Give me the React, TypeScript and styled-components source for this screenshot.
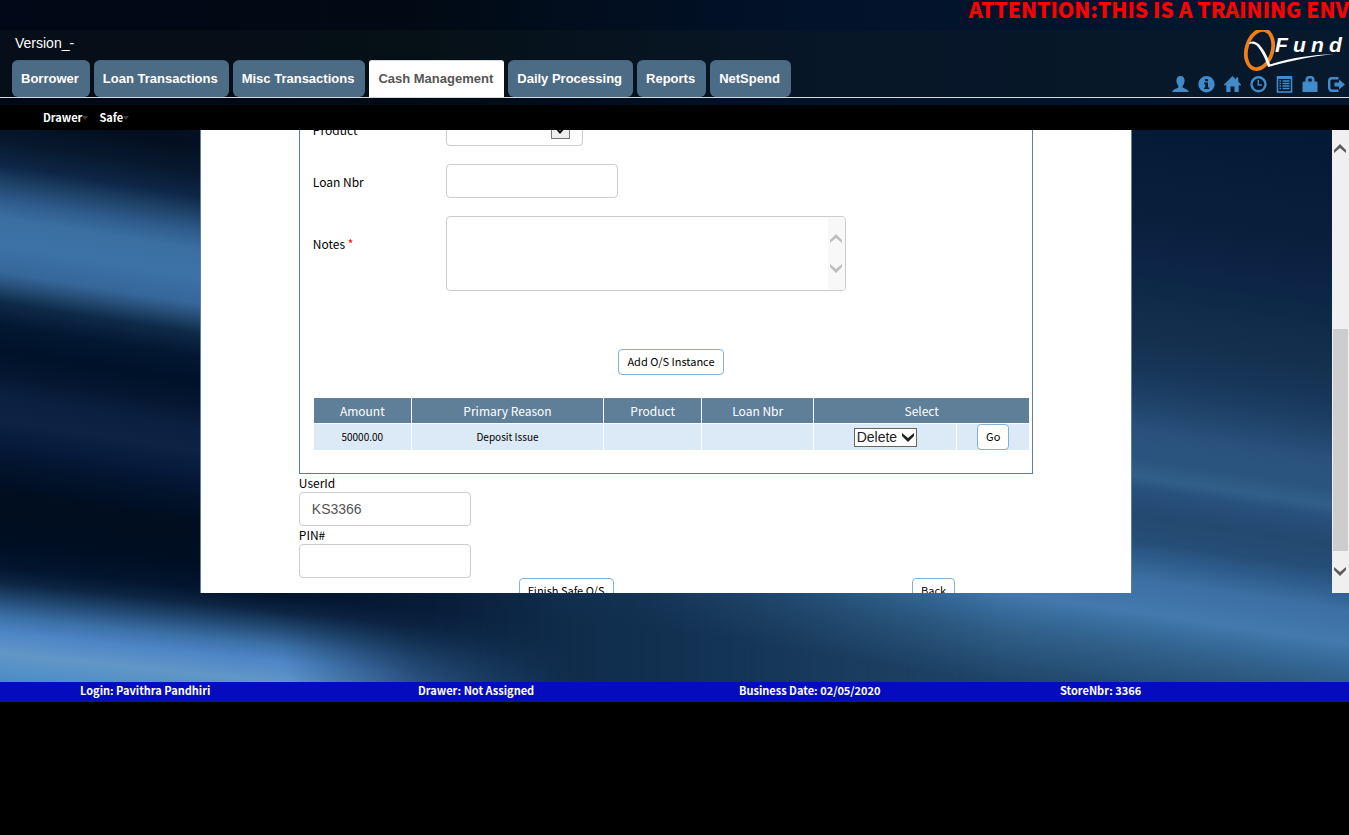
import React, { useLayoutEffect, useRef } from "react";
import styled, { createGlobalStyle } from "styled-components";

const sans = `"Noto Sans CJK SC", "Noto Sans", sans-serif`;
const arial = `"Liberation Sans", Arial, sans-serif`;
const steel = "#5f7f99";

const GlobalStyle = createGlobalStyle`
  * { box-sizing: border-box; }
  body { margin: 0; background: #000; color: #000; font: 12px/18px ${sans}; }
  button, input, select, textarea { margin: 0; }
`;

const Stage = styled.div`
  position: relative;
  isolation: isolate;
  overflow: hidden;
  background: #010a1c;
`;

const Backdrop = styled.svg`
  position: absolute;
  inset: 0;
  z-index: -1;
  width: 100%;
  height: 100%;
`;

const Notice = styled.div`
  height: 30px;
  color: #f00;
  font-size: 21px;
  font-weight: 900;
  line-height: 18px;
  text-align: right;
  white-space: nowrap;
`;

const Header = styled.header`
  display: flex;
  justify-content: space-between;
  height: 68px;
  padding-left: 12px;
  background: rgba(24, 34, 32, 0.25);
  border-bottom: 1px solid #d5dbe0;
`;

const HeaderLeft = styled.div`
  display: flex;
  flex-direction: column;
  justify-content: space-between;
`;

const Version = styled.div`
  padding: 4px 3px;
  color: #fff;
  font: 14px/18px ${arial};
`;

const Tabs = styled.nav`
  display: flex;
  gap: 4px;
`;

const Tab = styled.a<{ $active?: boolean }>`
  height: 37px;
  padding: 0 11px 0 9px;
  border-top: 1px solid ${(p) => (p.$active ? "#d5dbe0" : "#48657e")};
  border-radius: ${(p) => (p.$active ? "3px 3px 0 0" : "6px")};
  background: ${(p) => (p.$active ? "#fff" : "#4c6b85")};
  color: ${(p) => (p.$active ? "#555" : "#fff")};
  font: bold 13px/35px ${arial};
  text-decoration: none;
  white-space: nowrap;
`;

const HeaderRight = styled.div`
  display: flex;
  flex-direction: column;
  align-items: flex-end;
  justify-content: space-between;
  padding: 0 4px 4px 0;
`;

const IconRow = styled.div`
  display: flex;
  gap: 9px;
`;

const IconLink = styled.a`
  display: block;
  width: 17px;
  height: 17px;
  color: #428bca;
  svg { display: block; width: 17px; height: 17px; }
`;

const SubNav = styled.nav`
  display: flex;
  gap: 11px;
  height: 25px;
  margin-top: 7px;
  padding-left: 43px;
  background: #000;
`;

const SubLink = styled.a`
  display: flex;
  align-items: center;
  color: #fff;
  font-size: 11px;
  font-weight: 700;
  line-height: 25px;
  text-decoration: none;
  &::after {
    content: "";
    border: 3px solid transparent;
    border-top: 4px solid #3a3a3a;
    border-bottom: 0;
  }
`;

const Viewport = styled.div`
  display: flex;
  height: 463px;
  margin-bottom: 89px;
`;

const Scroller = styled.main`
  flex: 1;
  overflow: hidden;
`;

const Page = styled.form`
  width: 70%;
  margin: 0 auto;
  padding: 0 98px 40px;
  border: solid ${steel};
  border-width: 0 1px;
  background: #fff;
`;

const Panel = styled.section`
  padding: 14px 2px 22px 13px;
  border: 1px solid ${steel};
`;

const Field = styled.div<{ $top?: boolean }>`
  display: grid;
  grid-template-columns: 133px 1fr;
  align-items: ${(p) => (p.$top ? "start" : "center")};
  margin-bottom: 18px;
  label { padding-top: ${(p) => (p.$top ? "19px" : "2px")}; }
`;

const Required = styled.span`
  color: #f00;
`;

const TextInput = styled.input`
  display: block;
  width: 172px;
  height: 34px;
  padding: 6px 12px;
  border: 1px solid #ccc;
  border-radius: 4px;
  background: #fff;
  color: #555;
  font: 14px/20px ${arial};
`;

const Overlay = styled.div<{ $width: number }>`
  position: relative;
  width: ${(p) => p.$width}px;
`;

const ProductSelect = styled.select`
  display: block;
  appearance: none;
  width: 100%;
  height: 34px;
  padding: 6px 12px;
  border: 1px solid #ccc;
  border-radius: 4px;
  background: #fff;
`;

const SelectButton = styled.span`
  position: absolute;
  top: 7px;
  right: 13px;
  display: flex;
  align-items: flex-end;
  justify-content: center;
  width: 19px;
  height: 20px;
  padding-bottom: 4px;
  border: 1px solid #777;
  background: #eee;
  pointer-events: none;
`;

const NotesArea = styled.textarea`
  display: block;
  width: 100%;
  height: 75px;
  padding: 6px 12px;
  border: 1px solid #ccc;
  border-radius: 4px;
  background: #fff;
  resize: none;
  overflow: hidden;
`;

const NotesScroll = styled.span`
  position: absolute;
  top: 1px;
  right: 1px;
  bottom: 1px;
  display: flex;
  flex-direction: column;
  align-items: center;
  justify-content: center;
  gap: 21px;
  width: 17px;
  border-radius: 0 3px 3px 0;
  background: #f8f8f8;
`;

const Button = styled.button`
  height: 26px;
  padding: 0 8px 2px;
  border: 1px solid #7fb2db;
  border-radius: 4px;
  background: #fff;
  color: #000;
  font: 11px/18px ${sans};
  white-space: nowrap;
`;

const AddRow = styled.div`
  display: flex;
  justify-content: center;
  padding: 40px 1px 22px 0;
`;

const Table = styled.table`
  width: 100%;
  table-layout: fixed;
  border-spacing: 1px;
  text-align: center;
  th, td { padding: 0; }
  th {
    height: 25px;
    background: ${steel};
    color: #fff;
    font-weight: 400;
  }
  td {
    height: 26px;
    background: #dce9f6;
    font-size: 10px;
    line-height: 14px;
  }
`;

const CellCenter = styled.div`
  display: flex;
  align-items: center;
  justify-content: center;
`;

const ActionSelect = styled.select`
  display: block;
  appearance: none;
  width: 63px;
  height: 19px;
  padding: 0 2px;
  border: 1px solid #666;
  border-radius: 0;
  background: #fff;
  color: #222;
  font: 14px/16px ${arial};
`;

const ActionArrow = styled.span`
  position: absolute;
  top: 5px;
  right: 3px;
  pointer-events: none;
  svg { display: block; }
`;

const StackLabel = styled.label`
  display: block;
  height: 18px;
`;

const Actions = styled.div`
  display: flex;
  justify-content: space-between;
  padding: 0 78px 0 220px;
`;

const ScrollTrack = styled.div`
  display: flex;
  flex-direction: column;
  align-items: center;
  width: 17px;
  padding: 14px 1px 17px 0;
  background: #f0f0f0;
`;

const ScrollThumb = styled.div`
  width: 15px;
  height: 222px;
  margin: auto 0 16px;
  background: #cdcdcd;
`;

const Footer = styled.footer`
  display: grid;
  grid-template-columns: 338fr 321fr 321fr 289fr;
  height: 20px;
  padding-left: 80px;
  border-bottom: 1px solid #00f;
  background: #040cbe;
  color: #fff;
  font-size: 11px;
  font-weight: 700;
  line-height: 16px;
  white-space: nowrap;
`;

function Chevron({ up, color, size = 12 }: { up?: boolean; color: string; size?: number }) {
  return (
    <svg width={size} height={size === 12 ? 9 : 7} viewBox="0 0 12 9" preserveAspectRatio="none" aria-hidden="true">
      <path d={up ? "M0 6L6 0l6 6v3L6 4 0 9z" : "M0 0l6 5 6-5v3L6 9 0 3z"} fill={color} />
    </svg>
  );
}

function Waves() {
  const left: [number, string][] = [
    [0, "#010a1c"], [115, "#030f1f"], [140, "#07182e"], [165, "#0d2747"], [182, "#1f4268"],
    [200, "#2e5c8c"], [218, "#3b6fa2"], [245, "#3c72a6"], [272, "#36679b"], [284, "#285079"],
    [302, "#0e2a48"], [325, "#031732"], [350, "#00122a"], [372, "#04152f"], [396, "#0b2040"],
    [420, "#0d2343"], [445, "#06193a"], [462, "#02142e"], [490, "#000e20"], [702, "#000e20"],
  ];
  const low: [number, string][] = [
    [500, "#000e20"], [540, "#000e22"], [566, "#02142e"], [582, "#0c2542"], [600, "#244c77"],
    [616, "#3b6fa6"], [632, "#4d86c6"], [653, "#6196c6"], [672, "#5190c8"], [702, "#4379ab"],
  ];
  const right: [number, string][] = [
    [0, "#021630"], [130, "#041a36"], [215, "#0a1f3b"], [255, "#0c2346"], [300, "#0f2b49"],
    [337, "#14304e"], [370, "#17365a"], [400, "#1f4268"], [428, "#28507b"], [460, "#2b557e"],
    [476, "#315f89"], [490, "#27507c"], [515, "#234970"], [540, "#254e76"], [558, "#2e5d8c"],
    [580, "#3d70a4"], [612, "#4379ad"], [630, "#376c9c"], [650, "#305f88"], [702, "#1f4468"],
  ];
  return (
    <Backdrop viewBox="0 0 1349 702" preserveAspectRatio="none" aria-hidden="true">
      <defs>
        <linearGradient id="wl" gradientUnits="userSpaceOnUse" x1="0" y1="0" x2="0" y2="702" gradientTransform="skewY(9)">
          {left.map(([y, c]) => <stop key={y} offset={y / 702} stopColor={c} />)}
        </linearGradient>
        <linearGradient id="wb" gradientUnits="userSpaceOnUse" x1="0" y1="0" x2="0" y2="702" gradientTransform="skewY(6)">
          {low.map(([y, c]) => <stop key={y} offset={y / 702} stopColor={c} />)}
        </linearGradient>
        <linearGradient id="wr" gradientUnits="userSpaceOnUse" x1="0" y1="0" x2="0" y2="702" gradientTransform="translate(0 -170) skewY(8.5)">
          {right.map(([y, c]) => <stop key={y} offset={y / 702} stopColor={c} />)}
        </linearGradient>
        <linearGradient id="fade" gradientUnits="userSpaceOnUse" x1="420" y1="0" x2="1000" y2="0">
          <stop offset="0" stopColor="#fff" stopOpacity="0" />
          <stop offset="0.4" stopColor="#fff" stopOpacity="0.3" />
          <stop offset="0.75" stopColor="#fff" stopOpacity="0.75" />
          <stop offset="1" stopColor="#fff" />
        </linearGradient>
        <linearGradient id="dusk" gradientUnits="userSpaceOnUse" x1="290" y1="0" x2="570" y2="0" gradientTransform="rotate(-12 400 682)">
          <stop offset="0" stopColor="#0a213f" stopOpacity="0" />
          <stop offset="0.45" stopColor="#0a213f" stopOpacity="0.55" />
          <stop offset="1" stopColor="#0c2745" />
        </linearGradient>
        <linearGradient id="top" x1="0" y1="0" x2="1" y2="0">
          <stop offset="0" stopColor="#010817" />
          <stop offset="0.3" stopColor="#010a14" />
          <stop offset="0.6" stopColor="#02122a" />
          <stop offset="1" stopColor="#021630" />
        </linearGradient>
        <mask id="rightMask"><rect width="1349" height="702" fill="url(#fade)" /></mask>
      </defs>
      <rect width="1349" height="702" fill="url(#wl)" />
      <path d="M0 520L200 541 200 560 1349 560V702H0z" fill="url(#wb)" />
      <rect width="1349" height="702" fill="url(#dusk)" />
      <rect width="1349" height="702" fill="url(#wr)" mask="url(#rightMask)" />
      <rect width="1349" height="110" fill="url(#top)" />
    </Backdrop>
  );
}

function Logo() {
  return (
    <svg width="104" height="42" viewBox="0 0 104 42" role="img" aria-label="QFund">
      <ellipse cx="18.500" cy="19.500" rx="13" ry="20" transform="rotate(16 18.500 19.500)" fill="none" stroke="#ee7d1a" strokeWidth="3.800" />
      <path d="M7.500 14c2-4 8-3 12 2 4 5 7 10 9.500 18.500 22-7 42-9.500 64-10.500-22 2.500-43 6.500-66 13-3-9-6-15-10-20-3-3.600-7-4-9.500-3z" fill="#fff" />
      <text x="34 52 70 88" y="22" fill="#fff" fontFamily="'Liberation Sans Narrow', 'Liberation Sans', sans-serif" fontSize="21" fontWeight="700" fontStyle="italic">Fund</text>
    </svg>
  );
}

const icons: { name: string; art: React.ReactNode }[] = [
  {
    name: "Profile",
    art: <path d="M8.500 0C5.800 0 4.400 1.800 4.400 4.500c0 2.200.8 4.200 2 5.400v1.300c-.5 1-5.900 2-6.200 4.800h16.600c-.3-2.800-5.700-3.800-6.200-4.800V9.900c1.200-1.200 2-3.200 2-5.400C12.600 1.800 11.200 0 8.500 0z" fill="currentColor" />,
  },
  {
    name: "Information",
    art: <path fillRule="evenodd" d="M8.500 0a8.200 8.200 0 1 0 0 16.400A8.200 8.200 0 0 0 8.500 0zM7 3h3v2.300H7zM6 6.500h4v5h1.200V13H6v-1.500h1.200V8H6z" fill="currentColor" />,
  },
  {
    name: "Home",
    art: <path d="M8.500 0l3.500 3.400V1.500h2.300v4.200L17 8.500v.7h-2.300V16h-4.200v-5.500h-4V16H2.300V9.200H0v-.7z" fill="currentColor" />,
  },
  {
    name: "Clock",
    art: (
      <>
        <circle cx="8.500" cy="8.300" r="7" fill="none" stroke="currentColor" strokeWidth="2.400" />
        <path d="M8.300 4v5h3.500" fill="none" stroke="currentColor" strokeWidth="1.400" />
      </>
    ),
  },
  {
    name: "List",
    art: (
      <>
        <rect x="1.500" y="1" width="14" height="15" fill="none" stroke="currentColor" strokeWidth="1.600" />
        <path d="M1 1.500h15" stroke="currentColor" strokeWidth="3" />
        <path d="M3.500 5h1.500M6.500 5h7M3.500 7.500h1.500M6.500 7.500h7M3.500 10h1.500M6.500 10h7M3.500 12.500h1.500M6.500 12.500h7" stroke="currentColor" strokeWidth="1.300" />
      </>
    ),
  },
  {
    name: "Lock",
    art: <path fillRule="evenodd" d="M3.500 5.500V3.500c0-2.300 1.200-3.500 3.500-3.500h2c2.300 0 3.500 1.200 3.500 3.500v2h2l1 1V16H.5V6.500l1-1zm2.700 0h3.600V3.700c0-.9-.3-1.300-1.100-1.300H7.300c-.8 0-1.100.4-1.100 1.300z" fill="currentColor" />,
  },
  {
    name: "Log out",
    art: (
      <>
        <path d="M10.500 2.200H4Q1.200 2.200 1.200 5v6.300Q1.200 14.800 4 14.800h6.500" fill="none" stroke="currentColor" strokeWidth="2.400" />
        <path d="M6.500 6.500H11V3.500l6 5-6 5v-3H6.500z" fill="currentColor" />
      </>
    ),
  },
];

const tabs = ["Borrower", "Loan Transactions", "Misc Transactions", "Cash Management", "Daily Processing", "Reports", "NetSpend"];

export default function App() {
  const scroller = useRef<HTMLElement>(null);
  useLayoutEffect(() => {
    if (scroller.current) scroller.current.scrollTop = 33;
  }, []);

  return (
    <>
      <GlobalStyle />
      <Stage>
        <Waves />
        <Notice>ATTENTION:THIS IS A TRAINING ENV</Notice>
        <Header>
          <HeaderLeft>
            <Version>Version_-</Version>
            <Tabs>
              {tabs.map((t) => (
                <Tab key={t} href="#" $active={t === "Cash Management"}>{t}</Tab>
              ))}
            </Tabs>
          </HeaderLeft>
          <HeaderRight>
            <Logo />
            <IconRow>
              {icons.map((i) => (
                <IconLink key={i.name} href="#" aria-label={i.name}>
                  <svg viewBox="0 0 17 17">{i.art}</svg>
                </IconLink>
              ))}
            </IconRow>
          </HeaderRight>
        </Header>
        <SubNav>
          <SubLink href="#">Drawer</SubLink>
          <SubLink href="#">Safe</SubLink>
        </SubNav>
        <Viewport>
          <Scroller ref={scroller}>
            <Page onSubmit={(e) => e.preventDefault()}>
              <Panel>
                <Field>
                  <label htmlFor="product">Product</label>
                  <Overlay $width={137}>
                    <ProductSelect id="product" />
                    <SelectButton><Chevron color="#000" size={8} /></SelectButton>
                  </Overlay>
                </Field>
                <Field>
                  <label htmlFor="loan">Loan Nbr</label>
                  <TextInput id="loan" />
                </Field>
                <Field $top>
                  <label htmlFor="notes">Notes <Required>*</Required></label>
                  <Overlay $width={400}>
                    <NotesArea id="notes" />
                    <NotesScroll>
                      <Chevron up color="#bfbfbf" />
                      <Chevron color="#bfbfbf" />
                    </NotesScroll>
                  </Overlay>
                </Field>
                <AddRow><Button type="button">Add O/S Instance</Button></AddRow>
                <Table>
                  <colgroup>
                    <col style={{ width: "97px" }} />
                    <col />
                    <col style={{ width: "97px" }} />
                    <col style={{ width: "111px" }} />
                    <col style={{ width: "142px" }} />
                    <col style={{ width: "72px" }} />
                  </colgroup>
                  <thead>
                    <tr>
                      <th>Amount</th>
                      <th>Primary Reason</th>
                      <th>Product</th>
                      <th>Loan Nbr</th>
                      <th colSpan={2}>Select</th>
                    </tr>
                  </thead>
                  <tbody>
                    <tr>
                      <td>50000.00</td>
                      <td>Deposit Issue</td>
                      <td />
                      <td />
                      <td>
                        <CellCenter>
                          <Overlay $width={63}>
                            <ActionSelect aria-label="Action"><option>Delete</option></ActionSelect>
                            <ActionArrow><Chevron color="#222" /></ActionArrow>
                          </Overlay>
                        </CellCenter>
                      </td>
                      <td><CellCenter><Button type="button">Go</Button></CellCenter></td>
                    </tr>
                  </tbody>
                </Table>
              </Panel>
              <StackLabel htmlFor="user">UserId</StackLabel>
              <TextInput id="user" defaultValue="KS3366" />
              <StackLabel htmlFor="pin">PIN#</StackLabel>
              <TextInput id="pin" type="password" />
              <Actions>
                <Button type="submit">Finish Safe O/S</Button>
                <Button type="button">Back</Button>
              </Actions>
            </Page>
          </Scroller>
          <ScrollTrack aria-hidden="true">
            <Chevron up color="#5c5c5c" />
            <ScrollThumb />
            <Chevron color="#5c5c5c" />
          </ScrollTrack>
        </Viewport>
        <Footer>
          <span>Login: Pavithra Pandhiri</span>
          <span>Drawer: Not Assigned</span>
          <span>Business Date: 02/05/2020</span>
          <span>StoreNbr: 3366</span>
        </Footer>
      </Stage>
    </>
  );
}
